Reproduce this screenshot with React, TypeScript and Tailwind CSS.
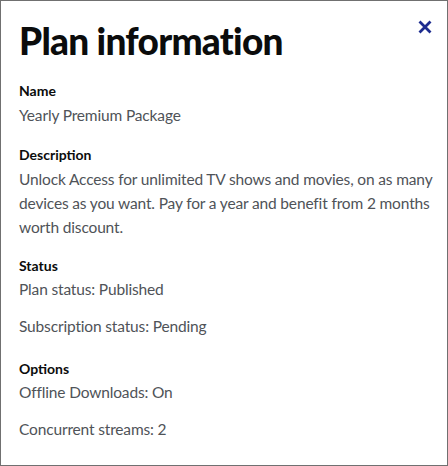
export default function App() {
  return (
    <div
      className="w-[448px] h-[466px] border border-[#707070] bg-white relative overflow-hidden"
      style={{ fontFamily: "Lato, 'Noto Sans', sans-serif" }}
    >
      <button aria-label="Close" className="absolute right-[15px] top-[19px] text-[#1d2c8f]">
        <svg width="14" height="14" viewBox="0 0 14 14" fill="none" stroke="currentColor" strokeWidth="2.8">
          <path d="M1.5 1.5L12.5 12.5M12.5 1.5L1.5 12.5" />
        </svg>
      </button>
      <div className="pl-[18px] pr-[8px] pt-[18px]">
        <h1 className="text-[37px] leading-[44px] font-black tracking-[-0.02em] text-[#0b0c0c]">
          Plan information
        </h1>

        <div className="mt-[18px]">
          <h2 className="text-[14px] leading-[20px] font-bold text-[#0b0c0c]">Name</h2>
          <p className="mt-[2px] text-[15.5px] leading-[24px] tracking-[-0.01em] text-[#4f5358]">
            Yearly Premium Package
          </p>
        </div>

        <div className="mt-[18px]">
          <h2 className="text-[14px] leading-[20px] font-bold text-[#0b0c0c]">Description</h2>
          <p className="mt-[2px] text-[15.5px] leading-[24px] tracking-[-0.01em] text-[#4f5358]">
            Unlock Access for unlimited TV shows and movies, on as many devices as you want. Pay for a year and
            benefit from 2 months worth discount.
          </p>
        </div>

        <div className="mt-[17px]">
          <h2 className="text-[14px] leading-[20px] font-bold text-[#0b0c0c]">Status</h2>
          <p className="mt-[1px] text-[15.5px] leading-[24px] tracking-[-0.01em] text-[#4f5358]">
            Plan status: Published
          </p>
          <p className="mt-[13px] text-[15.5px] leading-[24px] tracking-[-0.01em] text-[#4f5358]">
            Subscription status: Pending
          </p>
        </div>

        <div className="mt-[21px]">
          <h2 className="text-[14px] leading-[20px] font-bold text-[#0b0c0c]">Options</h2>
          <p className="mt-[1px] text-[15.5px] leading-[24px] tracking-[-0.01em] text-[#4f5358]">
            Offline Downloads: On
          </p>
          <p className="mt-[13px] text-[15.5px] leading-[24px] tracking-[-0.01em] text-[#4f5358]">
            Concurrent streams: 2
          </p>
        </div>
      </div>
    </div>
  );
}
